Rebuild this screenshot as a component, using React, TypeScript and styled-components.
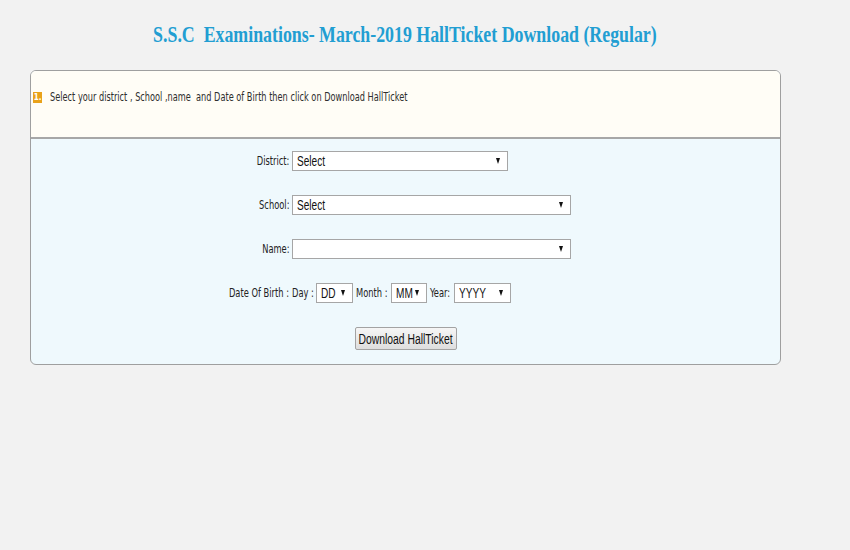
import React from "react";
import styled, { createGlobalStyle } from "styled-components";

const Global = createGlobalStyle`
  html, body { margin: 0; padding: 0; background: #f2f2f2; }
  body { width: 850px; height: 550px; overflow: hidden; font-family: "DejaVu Sans Condensed", "DejaVu Sans", sans-serif; }
`;

const Page = styled.div`
  width: 850px;
  height: 550px;
  background: #f2f2f2;
  padding-top: 18px;
  box-sizing: border-box;
`;

const Title = styled.h1`
  margin: 0;
  width: 810px;
  height: 32px;
  line-height: 32px;
  text-align: center;
  font-family: "Liberation Serif", "Times New Roman", serif;
  font-weight: bold;
  font-size: 24px;
  color: #229ed2;
  white-space: nowrap;
`;

const Squeeze = styled.span<{ $k: number; $o?: string }>`
  display: inline-block;
  flex: none;
  white-space: nowrap;
  transform: scaleX(${(p) => p.$k});
  transform-origin: ${(p) => p.$o ?? "left"} center;
`;

const Panel = styled.div`
  margin: 20px 0 0 30px;
  width: 751px;
  box-sizing: border-box;
  border: 1px solid #9f9f9f;
  border-radius: 6px;
  overflow: hidden;
  background: #eff9fd;
`;

const Header = styled.div`
  height: 68px;
  box-sizing: border-box;
  background: #fffdf6;
  border-bottom: 2px solid #a7a7a7;
  display: flex;
  align-items: flex-start;
  padding: 19px 0 0 2px;
  gap: 8px;
  font-size: 12px;
  color: #2e2e2e;
`;

const Badge = styled.span`
  width: 9px;
  height: 11px;
  background: #e9a21a;
  color: #fff;
  font-size: 8px;
  line-height: 11px;
  text-align: center;
  font-weight: bold;
  margin-top: 2px;
`;

const Body = styled.div`
  padding: 12px 0 14px;
  display: flex;
  flex-direction: column;
  gap: 24px;
`;

const Row = styled.div`
  display: flex;
  align-items: center;
  height: 20px;
`;

const Label = styled.label`
  width: 258px;
  margin-right: 3px;
  text-align: right;
  font-size: 12px;
  color: #222;
`;

const Inline = styled.span<{ $w: number }>`
  width: ${(p) => p.$w}px;
  flex: none;
  font-size: 12px;
  color: #222;
`;

const SelectBox = styled.div<{ $w: number; $mr?: number }>`
  position: relative;
  flex: none;
  width: ${(p) => p.$w}px;
  height: 20px;
  margin-right: ${(p) => p.$mr ?? 0}px;
  box-sizing: border-box;
  border: 1px solid #a6a6a6;
  background: #fff;
  padding-left: 4px;
  font-family: "Liberation Sans", Arial, sans-serif;
  font-size: 14px;
  line-height: 18px;
  color: #111;
`;

const Arrow = styled.span`
  position: absolute;
  right: 7px;
  top: 6px;
  width: 0;
  height: 0;
  border-left: 2.5px solid transparent;
  border-right: 2.5px solid transparent;
  border-top: 6px solid #111;
`;

const ButtonRow = styled.div`
  display: flex;
  justify-content: center;
`;

const Button = styled.button`
  width: 102px;
  height: 23px;
  display: flex;
  align-items: center;
  justify-content: center;
  border: 1px solid #a3a3a3;
  border-radius: 2px;
  background: linear-gradient(#f6f6f6, #dedede);
  font-family: "Liberation Sans", Arial, sans-serif;
  font-size: 14px;
  color: #111;
  padding: 0;
  white-space: nowrap;
  overflow: visible;
`;

function Select({ w, value, mr }: { w: number; value: string; mr?: number }) {
  return (
    <SelectBox $w={w} $mr={mr} role="combobox">
      <Squeeze $k={0.72}>{value}</Squeeze>
      <Arrow />
    </SelectBox>
  );
}

const K = 0.77;

export default function App() {
  return (
    <>
      <Global />
      <Page>
        <Title>
          <Squeeze $k={0.743} $o="center">S.S.C&nbsp; Examinations- March-2019 HallTicket Download (Regular)</Squeeze>
        </Title>
        <Panel>
          <Header>
            <Badge>1.</Badge>
            <Squeeze $k={0.76}>Select your district , School ,name&nbsp; and Date of Birth then click on Download HallTicket</Squeeze>
          </Header>
          <Body>
            <Row>
              <Label><Squeeze $k={K} $o="right">District:</Squeeze></Label>
              <Select w={216} value="Select" />
            </Row>
            <Row>
              <Label><Squeeze $k={K} $o="right">School:</Squeeze></Label>
              <Select w={279} value="Select" />
            </Row>
            <Row>
              <Label><Squeeze $k={K} $o="right">Name:</Squeeze></Label>
              <Select w={279} value="" />
            </Row>
            <Row>
              <Label><Squeeze $k={K} $o="right">Date Of Birth :</Squeeze></Label>
              <Inline $w={24}><Squeeze $k={K}>Day :</Squeeze></Inline>
              <Select w={37} value="DD" mr={3} />
              <Inline $w={35}><Squeeze $k={K}>Month :</Squeeze></Inline>
              <Select w={36} value="MM" mr={3} />
              <Inline $w={24}><Squeeze $k={K}>Year:</Squeeze></Inline>
              <Select w={57} value="YYYY" />
            </Row>
            <ButtonRow>
              <Button><Squeeze $k={0.74} $o="center">Download HallTicket</Squeeze></Button>
            </ButtonRow>
          </Body>
        </Panel>
      </Page>
    </>
  );
}
